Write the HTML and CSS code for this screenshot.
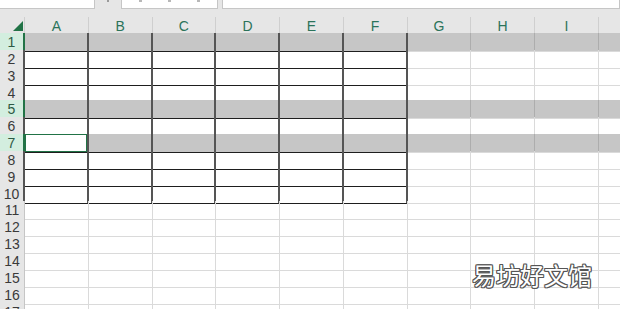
FILE: index.html
```html
<!DOCTYPE html>
<html lang="zh-CN">
<head>
    <meta charset="UTF-8">
    <meta name="viewport" content="width=device-width, initial-scale=1.0">
    <title>工作表</title>
    <link rel="stylesheet" href="styles.css">
</head>
<body>
    <div class="toolbar">
        <div class="name-box"></div>
        <div class="toolbar-dot"></div>
        <div class="fx-box">
            <span class="fx-mark"></span>
            <span class="fx-mark"></span>
            <span class="fx-mark"></span>
        </div>
        <div class="formula-bar"></div>
    </div>

    <div class="sheet">
        <div class="row head">
            <div class="corner">
                <svg width="25" height="16" viewBox="0 0 25 16"><polygon points="13,14 23,14 23,4" fill="#217346"/></svg>
            </div>
            <div class="col">A</div><div class="col">B</div><div class="col">C</div><div class="col">D</div><div class="col">E</div>
            <div class="col">F</div><div class="col">G</div><div class="col">H</div><div class="col">I</div><div class="col"></div>
        </div>

        <div class="row tbl sel">
            <div class="num">1</div>
            <div class="c"></div><div class="c"></div><div class="c"></div><div class="c"></div><div class="c"></div>
            <div class="c"></div><div class="c"></div><div class="c"></div><div class="c"></div><div class="c"></div>
        </div>
        <div class="row tbl">
            <div class="num">2</div>
            <div class="c"></div><div class="c"></div><div class="c"></div><div class="c"></div><div class="c"></div>
            <div class="c"></div><div class="c"></div><div class="c"></div><div class="c"></div><div class="c"></div>
        </div>
        <div class="row tbl">
            <div class="num">3</div>
            <div class="c"></div><div class="c"></div><div class="c"></div><div class="c"></div><div class="c"></div>
            <div class="c"></div><div class="c"></div><div class="c"></div><div class="c"></div><div class="c"></div>
        </div>
        <div class="row tbl">
            <div class="num">4</div>
            <div class="c"></div><div class="c"></div><div class="c"></div><div class="c"></div><div class="c"></div>
            <div class="c"></div><div class="c"></div><div class="c"></div><div class="c"></div><div class="c"></div>
        </div>
        <div class="row tbl sel">
            <div class="num">5</div>
            <div class="c"></div><div class="c"></div><div class="c"></div><div class="c"></div><div class="c"></div>
            <div class="c"></div><div class="c"></div><div class="c"></div><div class="c"></div><div class="c"></div>
        </div>
        <div class="row tbl">
            <div class="num">6</div>
            <div class="c"></div><div class="c"></div><div class="c"></div><div class="c"></div><div class="c"></div>
            <div class="c"></div><div class="c"></div><div class="c"></div><div class="c"></div><div class="c"></div>
        </div>
        <div class="row tbl sel">
            <div class="num">7</div>
            <div class="c active"></div><div class="c"></div><div class="c"></div><div class="c"></div><div class="c"></div>
            <div class="c"></div><div class="c"></div><div class="c"></div><div class="c"></div><div class="c"></div>
        </div>
        <div class="row tbl">
            <div class="num">8</div>
            <div class="c"></div><div class="c"></div><div class="c"></div><div class="c"></div><div class="c"></div>
            <div class="c"></div><div class="c"></div><div class="c"></div><div class="c"></div><div class="c"></div>
        </div>
        <div class="row tbl">
            <div class="num">9</div>
            <div class="c"></div><div class="c"></div><div class="c"></div><div class="c"></div><div class="c"></div>
            <div class="c"></div><div class="c"></div><div class="c"></div><div class="c"></div><div class="c"></div>
        </div>
        <div class="row tbl">
            <div class="num">10</div>
            <div class="c"></div><div class="c"></div><div class="c"></div><div class="c"></div><div class="c"></div>
            <div class="c"></div><div class="c"></div><div class="c"></div><div class="c"></div><div class="c"></div>
        </div>
        <div class="row">
            <div class="num">11</div>
            <div class="c"></div><div class="c"></div><div class="c"></div><div class="c"></div><div class="c"></div>
            <div class="c"></div><div class="c"></div><div class="c"></div><div class="c"></div><div class="c"></div>
        </div>
        <div class="row">
            <div class="num">12</div>
            <div class="c"></div><div class="c"></div><div class="c"></div><div class="c"></div><div class="c"></div>
            <div class="c"></div><div class="c"></div><div class="c"></div><div class="c"></div><div class="c"></div>
        </div>
        <div class="row">
            <div class="num">13</div>
            <div class="c"></div><div class="c"></div><div class="c"></div><div class="c"></div><div class="c"></div>
            <div class="c"></div><div class="c"></div><div class="c"></div><div class="c"></div><div class="c"></div>
        </div>
        <div class="row">
            <div class="num">14</div>
            <div class="c"></div><div class="c"></div><div class="c"></div><div class="c"></div><div class="c"></div>
            <div class="c"></div><div class="c"></div><div class="c"></div><div class="c"></div><div class="c"></div>
        </div>
        <div class="row">
            <div class="num">15</div>
            <div class="c"></div><div class="c"></div><div class="c"></div><div class="c"></div><div class="c"></div>
            <div class="c"></div><div class="c"></div><div class="c"></div><div class="c"></div><div class="c"></div>
        </div>
        <div class="row">
            <div class="num">16</div>
            <div class="c"></div><div class="c"></div><div class="c"></div><div class="c"></div><div class="c"></div>
            <div class="c"></div><div class="c"></div><div class="c"></div><div class="c"></div><div class="c"></div>
        </div>
        <div class="row">
            <div class="num">17</div>
            <div class="c"></div><div class="c"></div><div class="c"></div><div class="c"></div><div class="c"></div>
            <div class="c"></div><div class="c"></div><div class="c"></div><div class="c"></div><div class="c"></div>
        </div>
    </div>

    <div class="watermark">易坊好文馆</div>
</body>
</html>
```

FILE: styles.css
```css
/* Page */
body {
    margin: 0;
    width: 620px;
    height: 309px;
    overflow: hidden;
    position: relative;
    background: #fff;
    font-family: 'Liberation Sans', Arial, sans-serif;
}

/* Formula bar strip (cut off at the top) */
.toolbar {
    display: flex;
    height: 17px;
    background: #e6e6e6;
}

.name-box,
.fx-box,
.formula-bar {
    box-sizing: border-box;
    height: 9px;
    background: #fff;
    border-right: 1px solid #c6c6c6;
    border-bottom: 1px solid #c6c6c6;
}

.name-box {
    width: 95px;
}

.toolbar-dot {
    width: 2px;
    height: 2px;
    margin: 0 12px 0 12px;
    background: #9a9a9a;
}

.fx-box {
    width: 97px;
    display: flex;
    gap: 26px;
    padding-left: 17px;
    border-left: 1px solid #c6c6c6;
}

.fx-mark {
    width: 3px;
    height: 2px;
    background: #b8b8b8;
}

.formula-bar {
    flex: 1;
    margin-left: 4px;
    border-left: 1px solid #c6c6c6;
}

/* Grid */
.sheet {
    overflow: hidden;
}

.row {
    display: grid;
    grid-template-columns: 25px repeat(10, 63.75px);
    height: 16.85px;
}

.row > div {
    box-sizing: border-box;
}

.row.head {
    height: 16px;
}

.corner,
.col {
    background: #e6e6e6;
    border-bottom: 1px solid #217346;
}

.corner {
    border-right: 1px solid #cfcfcf;
}

.corner svg {
    display: block;
}

.col {
    border-right: 1px solid #cfcfcf;
    color: #2b735a;
    font-size: 14px;
    line-height: 19px;
    text-align: center;
}

.num {
    background: #e6e6e6;
    border-right: 1px solid #c6c6c6;
    border-bottom: 1px solid #d2d2d2;
    color: #3a3a3a;
    font-size: 14px;
    line-height: 18px;
    text-align: center;
}

.c {
    border-right: 1px solid #dadada;
    border-bottom: 1px solid #dadada;
}

/* Bordered table A1:F10 */
.tbl .num {
    border-right: 2px solid #555;
}

.tbl .c:nth-child(-n+7) {
    border-right: 2px solid #555;
    border-bottom-color: #1e1e1e;
}

/* Selected rows 1, 5, 7 */
.sel .num {
    background: #d3eedf;
    color: #2d5a44;
    border-right: 2px solid #217346;
}

.sel .c {
    background: #c6c6c6;
}

.sel .c:nth-child(n+8) {
    border-right-color: #adadad;
}

.sel .c.active {
    background: #fff;
    box-shadow: inset 0 0 0 1px #217346;
}

/* Watermark */
.watermark {
    position: absolute;
    left: 472px;
    top: 260px;
    font-family: 'Noto Sans CJK SC', sans-serif;
    font-size: 24px;
    line-height: 30px;
    color: #fff;
    text-shadow:
        1px 0 0 #555, -1px 0 0 #555, 0 1px 0 #555, 0 -1px 0 #555,
        1px 1px 0 #555, -1px -1px 0 #555, 1px -1px 0 #555, -1px 1px 0 #555;
}
```
